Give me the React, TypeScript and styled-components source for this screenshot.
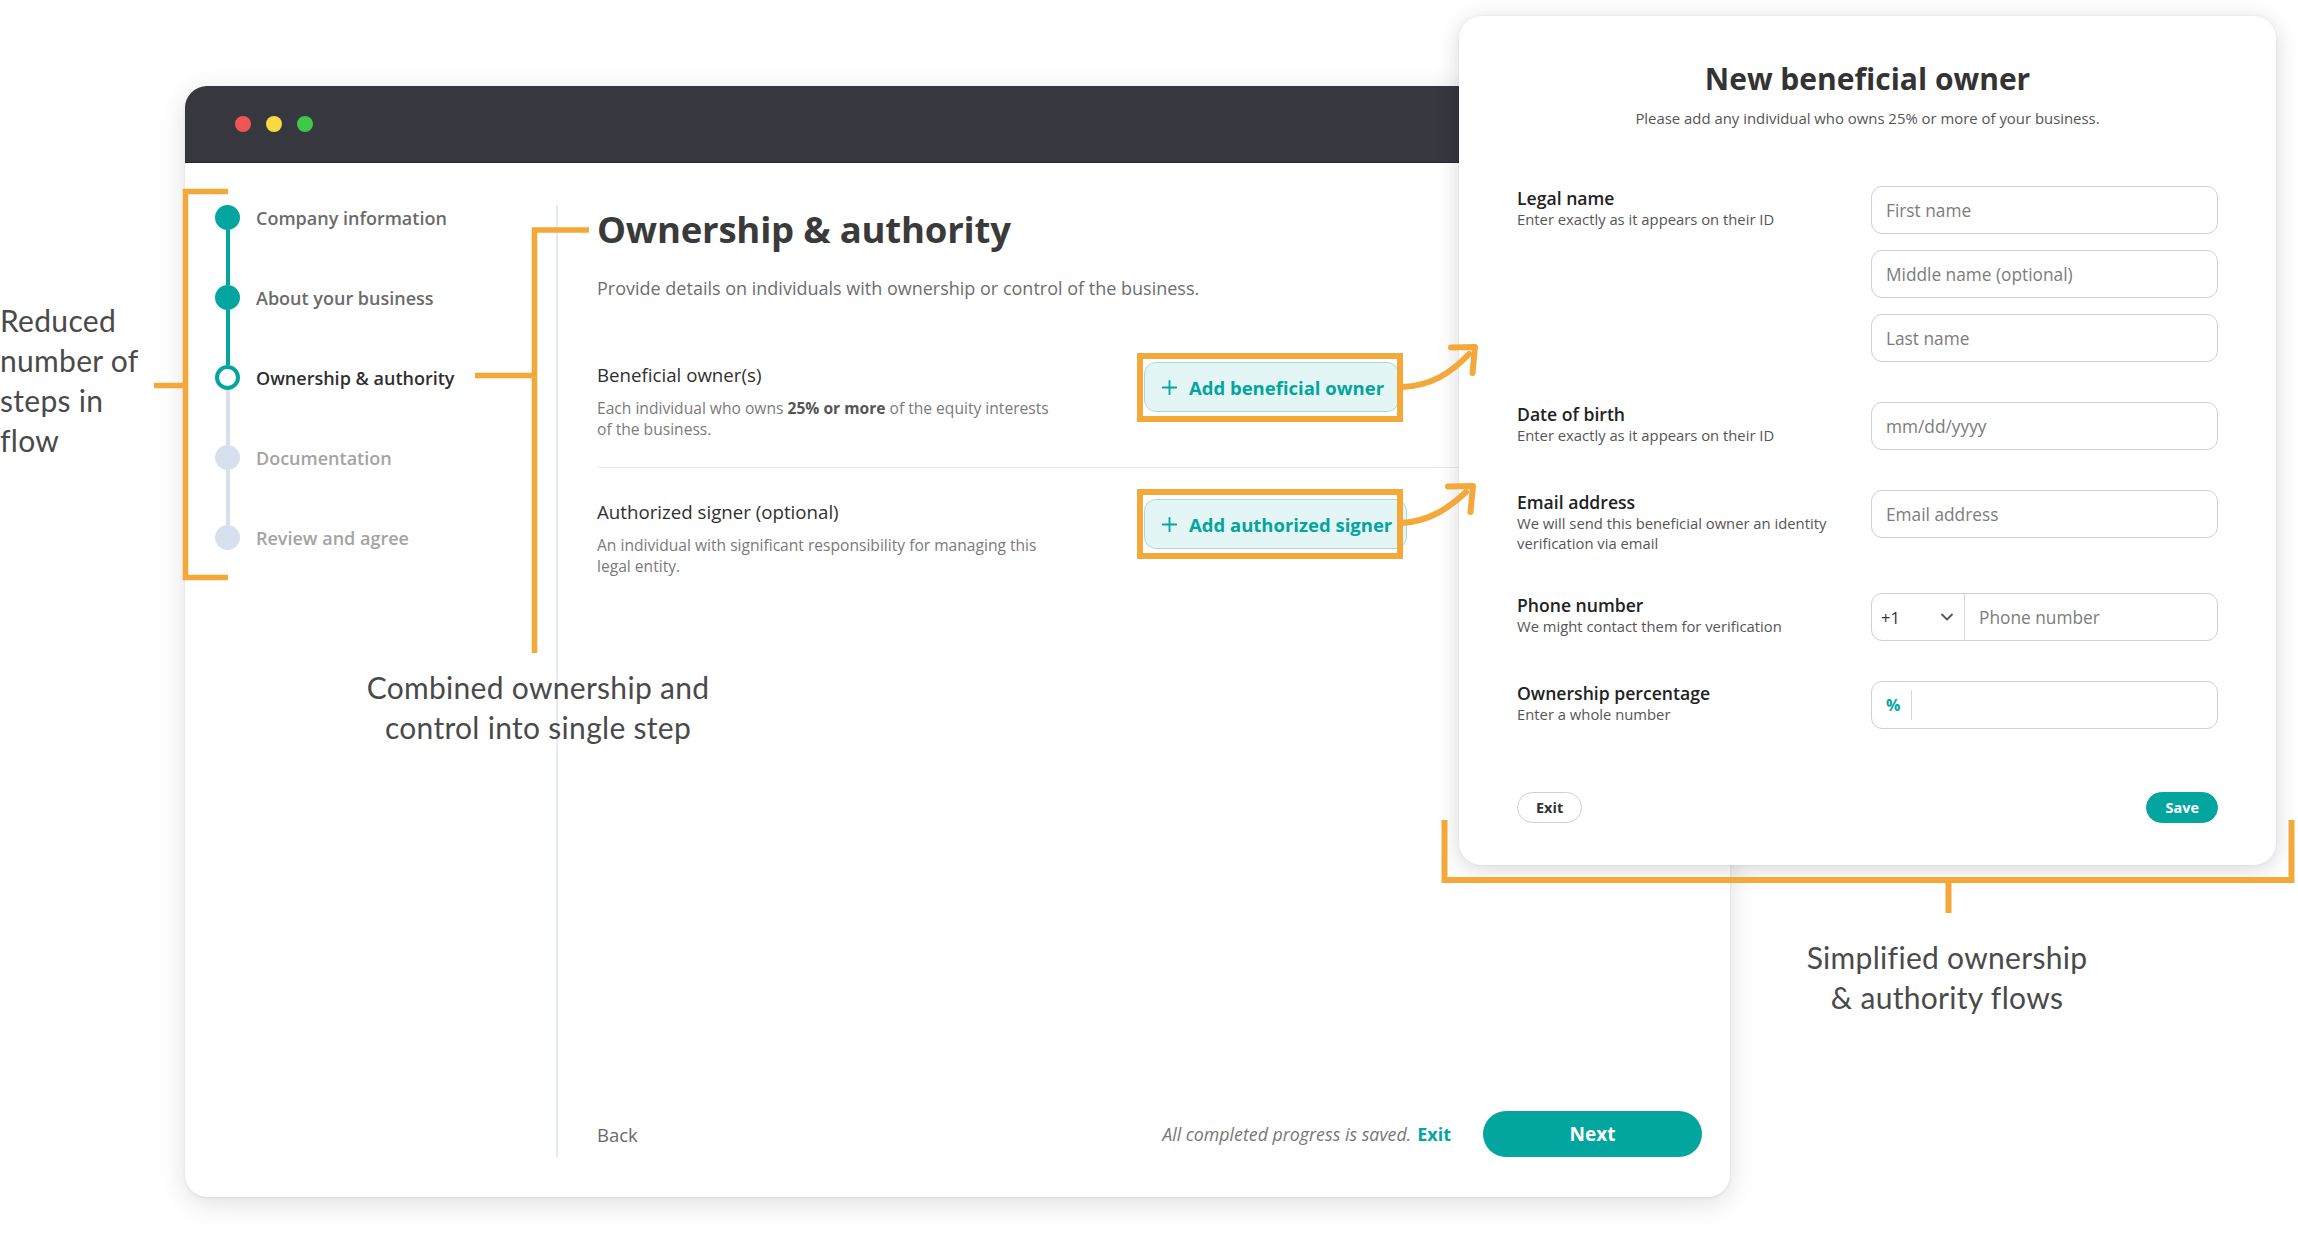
import React from "react";
import styled, { createGlobalStyle } from "styled-components";
import { ChevronDown, Plus } from "lucide-react";

const TEAL = "#03a59f";
const ORANGE = "#f4a83a";

const Global = createGlobalStyle`
  html, body { margin: 0; padding: 0; background: #ffffff; }
  body { font-family: "Open Sans", "Noto Sans", sans-serif; }
  * { box-sizing: border-box; }
`;

const Stage = styled.div`
  position: relative;
  width: 2298px;
  height: 1244px;
  overflow: hidden;
  background: #ffffff;
`;

/* ---------- Browser window mock ---------- */
const Window = styled.div`
  position: absolute;
  left: 185px;
  top: 86px;
  width: 1545px;
  height: 1111px;
  display: flex;
  flex-direction: column;
  background: #ffffff;
  border-radius: 22px;
  box-shadow: 0 6px 28px rgba(0, 0, 0, 0.13), 0 1px 3px rgba(0, 0, 0, 0.08);
`;

const TitleBar = styled.div`
  height: 77px;
  flex: none;
  display: flex;
  align-items: center;
  gap: 15px;
  padding-left: 50px;
  background: #37383f;
  border-radius: 22px 22px 0 0;
  border-bottom: 1px solid #26272c;
`;

const Dot = styled.span<{ $color: string }>`
  width: 16px;
  height: 16px;
  border-radius: 50%;
  background: ${(p) => p.$color};
`;

const WindowBody = styled.div`
  flex: 1;
  display: flex;
  padding: 42px 28px 40px 0;
`;

const Sidebar = styled.nav`
  width: 371px;
  flex: none;
  padding-left: 30px;
  display: flex;
  flex-direction: column;
`;

const StepRow = styled.div`
  display: flex;
  align-items: center;
  gap: 16px;
  height: 25px;
`;

const StepCircle = styled.span<{ $state: "done" | "current" | "todo" }>`
  width: 25px;
  height: 25px;
  border-radius: 50%;
  flex: none;
  background: ${(p) =>
    p.$state === "done" ? TEAL : p.$state === "current" ? "#ffffff" : "#d7e0ee"};
  border: ${(p) => (p.$state === "current" ? `4px solid ${TEAL}` : "none")};
`;

const StepLabel = styled.span<{ $state: "done" | "current" | "todo" }>`
  font-size: 18px;
  font-weight: 600;
  white-space: nowrap;
  color: ${(p) =>
    p.$state === "done" ? "#6b6b6b" : p.$state === "current" ? "#2f2f2f" : "#a3a3a3"};
`;

const Connector = styled.span<{ $active: boolean }>`
  width: 4px;
  height: 55px;
  margin-left: 10.5px;
  background: ${(p) => (p.$active ? TEAL : "#d7e0ee")};
`;

const Main = styled.main`
  flex: 1;
  display: flex;
  flex-direction: column;
  border-left: 2px solid #e5ebf3;
  padding-left: 39px;
`;

const PageTitle = styled.h1`
  margin: 3px 0 0;
  font-size: 36.5px;
  line-height: 42px;
  font-weight: 700;
  color: #3a3a3a;
  letter-spacing: -0.2px;
`;

const PageSub = styled.p`
  margin: 26px 0 0;
  font-size: 18px;
  line-height: 24px;
  color: #6e6e6e;
`;

const Section = styled.section<{ $first?: boolean }>`
  display: grid;
  grid-template-columns: 547px auto;
  align-items: start;
  margin-top: ${(p) => (p.$first ? "62px" : "0")};
  padding: ${(p) => (p.$first ? "0 0 28px" : "31px 0 0")};
  border-bottom: ${(p) => (p.$first ? "1.5px solid #e4e9f1" : "none")};
`;

const SectionText = styled.div`
  padding-top: 1px;
`;

const SectionHeading = styled.h3`
  margin: 0;
  font-size: 18.7px;
  line-height: 24px;
  font-weight: 500;
  color: #2f2f2f;
`;

const SectionDesc = styled.p`
  margin: 11px 0 0;
  max-width: 462px;
  font-size: 15.6px;
  line-height: 20.5px;
  color: #7a7a7a;
  b { font-weight: 700; color: #555; }
`;

const AddButton = styled.button`
  justify-self: start;
  height: 50px;
  display: flex;
  align-items: center;
  gap: 8px;
  padding: 0 14px 0 13px;
  background: #e3f5f4;
  border: 1.5px solid #a5dcd8;
  border-radius: 12px;
  color: ${TEAL};
  font-family: "Open Sans", sans-serif;
  font-size: 18.5px;
  font-weight: 700;
  white-space: nowrap;
`;

const Footer = styled.footer`
  margin-top: auto;
  height: 46px;
  display: flex;
  align-items: center;
`;

const BackLink = styled.span`
  font-size: 18.5px;
  color: #6a6a6a;
`;

const SavedNote = styled.span`
  margin-left: auto;
  font-size: 17.8px;
  font-style: italic;
  color: #777777;
  b { font-style: normal; font-weight: 700; color: ${TEAL}; font-size: 18px; margin-left: 6px; }
`;

const NextButton = styled.button`
  margin-left: 32px;
  width: 219px;
  height: 46px;
  border: none;
  border-radius: 23px;
  background: ${TEAL};
  color: #ffffff;
  font-family: "Open Sans", sans-serif;
  font-size: 19px;
  font-weight: 700;
`;

/* ---------- Modal ---------- */
const Modal = styled.div`
  position: absolute;
  left: 1459px;
  top: 16px;
  width: 817px;
  height: 849px;
  display: flex;
  flex-direction: column;
  padding: 43px 58px 42px;
  background: #ffffff;
  border-radius: 22px;
  box-shadow: 0 4px 22px rgba(0, 0, 0, 0.16), 0 0 2px rgba(0, 0, 0, 0.08);
`;

const ModalTitle = styled.h2`
  margin: 0;
  text-align: center;
  font-size: 30px;
  line-height: 40px;
  font-weight: 700;
  color: #333333;
`;

const ModalSub = styled.p`
  margin: 9px 0 0;
  text-align: center;
  font-size: 14.9px;
  line-height: 20px;
  color: #555555;
`;

const Form = styled.div`
  margin-top: 58px;
  display: flex;
  flex-direction: column;
  gap: 40px;
`;

const FormRow = styled.div`
  display: grid;
  grid-template-columns: 1fr 347px;
  column-gap: 24px;
  align-items: start;
`;

const LabelBlock = styled.div`
  padding-top: 1px;
`;

const FieldLabel = styled.div`
  font-size: 17.6px;
  line-height: 22px;
  font-weight: 600;
  color: #222222;
`;

const FieldHelp = styled.div`
  font-size: 14.8px;
  line-height: 20px;
  color: #555555;
`;

const Inputs = styled.div`
  display: flex;
  flex-direction: column;
  gap: 16px;
`;

const InputBox = styled.div`
  height: 48px;
  display: flex;
  align-items: center;
  border: 1.5px solid #d0d0d0;
  border-radius: 11px;
  background: #ffffff;
  overflow: hidden;
`;

const TextInput = styled.input`
  flex: 1;
  min-width: 0;
  height: 100%;
  border: none;
  outline: none;
  background: transparent;
  padding: 0 14px;
  font-family: "Open Sans", sans-serif;
  font-size: 17.3px;
  color: #333;
  &::placeholder { color: #7c7c7c; }
`;

const CountrySelect = styled.div`
  width: 93px;
  height: 100%;
  flex: none;
  display: flex;
  align-items: center;
  justify-content: space-between;
  padding: 0 7px 0 9px;
  border-right: 1.5px solid #d6d6d6;
  font-size: 16.5px;
  color: #333;
`;

const PercentSign = styled.span`
  flex: none;
  align-self: stretch;
  display: flex;
  align-items: center;
  margin: 8px 0;
  padding: 0 11px 0 14px;
  border-right: 1.5px solid #d6d6d6;
  color: ${TEAL};
  font-size: 16px;
  font-weight: 700;
`;

const Actions = styled.div`
  margin-top: auto;
  display: flex;
  justify-content: space-between;
`;

const PillButton = styled.button<{ $primary?: boolean }>`
  height: 31px;
  padding: 0 ${(p) => (p.$primary ? "18px" : "18px")};
  border-radius: 16px;
  border: 1.5px solid ${(p) => (p.$primary ? TEAL : "#cfcfcf")};
  background: ${(p) => (p.$primary ? TEAL : "#ffffff")};
  color: ${(p) => (p.$primary ? "#ffffff" : "#333333")};
  font-family: "Open Sans", sans-serif;
  font-size: 14.5px;
  font-weight: 700;
`;

/* ---------- Annotations ---------- */
const Callout = styled.div<{ $x: number; $y: number; $w: number; $align: string }>`
  position: absolute;
  left: ${(p) => p.$x}px;
  top: ${(p) => p.$y}px;
  width: ${(p) => p.$w}px;
  text-align: ${(p) => p.$align};
  font-family: "Lato", "Noto Sans", sans-serif;
  font-size: 30px;
  line-height: 40px;
  font-weight: 400;
  letter-spacing: 0.3px;
  color: #4a4a4a;
  white-space: pre-line;
`;

const Overlay = styled.svg`
  position: absolute;
  left: 0;
  top: 0;
  pointer-events: none;
`;

type St = "done" | "current" | "todo";
const steps: { label: string; state: St }[] = [
  { label: "Company information", state: "done" },
  { label: "About your business", state: "done" },
  { label: "Ownership & authority", state: "current" },
  { label: "Documentation", state: "todo" },
  { label: "Review and agree", state: "todo" },
];

export default function App() {
  return (
    <>
      <Global />
      <Stage>
        <Window>
          <TitleBar>
            <Dot $color="#f25454" />
            <Dot $color="#f8d940" />
            <Dot $color="#3fc74a" />
          </TitleBar>
          <WindowBody>
            <Sidebar>
              {steps.map((s, i) => (
                <React.Fragment key={s.label}>
                  {i > 0 && <Connector $active={i <= 2} />}
                  <StepRow>
                    <StepCircle $state={s.state} />
                    <StepLabel $state={s.state}>{s.label}</StepLabel>
                  </StepRow>
                </React.Fragment>
              ))}
            </Sidebar>
            <Main>
              <PageTitle>Ownership &amp; authority</PageTitle>
              <PageSub>Provide details on individuals with ownership or control of the business.</PageSub>
              <Section $first>
                <SectionText>
                  <SectionHeading>Beneficial owner(s)</SectionHeading>
                  <SectionDesc>
                    Each individual who owns <b>25% or more</b> of the equity interests of the business.
                  </SectionDesc>
                </SectionText>
                <AddButton>
                  <Plus size={23} strokeWidth={1.9} />
                  Add beneficial owner
                </AddButton>
              </Section>
              <Section>
                <SectionText>
                  <SectionHeading>Authorized signer (optional)</SectionHeading>
                  <SectionDesc>
                    An individual with significant responsibility for managing this legal entity.
                  </SectionDesc>
                </SectionText>
                <AddButton>
                  <Plus size={23} strokeWidth={1.9} />
                  Add authorized signer
                </AddButton>
              </Section>
              <Footer>
                <BackLink>Back</BackLink>
                <SavedNote>
                  All completed progress is saved.<b>Exit</b>
                </SavedNote>
                <NextButton>Next</NextButton>
              </Footer>
            </Main>
          </WindowBody>
        </Window>

        <Modal>
          <ModalTitle>New beneficial owner</ModalTitle>
          <ModalSub>Please add any individual who owns 25% or more of your business.</ModalSub>
          <Form>
            <FormRow>
              <LabelBlock>
                <FieldLabel>Legal name</FieldLabel>
                <FieldHelp>Enter exactly as it appears on their ID</FieldHelp>
              </LabelBlock>
              <Inputs>
                <InputBox><TextInput placeholder="First name" /></InputBox>
                <InputBox><TextInput placeholder="Middle name (optional)" /></InputBox>
                <InputBox><TextInput placeholder="Last name" /></InputBox>
              </Inputs>
            </FormRow>
            <FormRow>
              <LabelBlock>
                <FieldLabel>Date of birth</FieldLabel>
                <FieldHelp>Enter exactly as it appears on their ID</FieldHelp>
              </LabelBlock>
              <InputBox><TextInput placeholder="mm/dd/yyyy" /></InputBox>
            </FormRow>
            <FormRow>
              <LabelBlock>
                <FieldLabel>Email address</FieldLabel>
                <FieldHelp>We will send this beneficial owner an identity verification via email</FieldHelp>
              </LabelBlock>
              <InputBox><TextInput placeholder="Email address" /></InputBox>
            </FormRow>
            <FormRow>
              <LabelBlock>
                <FieldLabel>Phone number</FieldLabel>
                <FieldHelp>We might contact them for verification</FieldHelp>
              </LabelBlock>
              <InputBox>
                <CountrySelect>
                  +1
                  <ChevronDown size={20} strokeWidth={2.2} color="#555" />
                </CountrySelect>
                <TextInput placeholder="Phone number" />
              </InputBox>
            </FormRow>
            <FormRow>
              <LabelBlock>
                <FieldLabel>Ownership percentage</FieldLabel>
                <FieldHelp>Enter a whole number</FieldHelp>
              </LabelBlock>
              <InputBox>
                <PercentSign>%</PercentSign>
                <TextInput />
              </InputBox>
            </FormRow>
          </Form>
          <Actions>
            <PillButton>Exit</PillButton>
            <PillButton $primary>Save</PillButton>
          </Actions>
        </Modal>

        <Overlay width="2298" height="1244" viewBox="0 0 2298 1244">
          <g fill="none" stroke={ORANGE} strokeWidth="5.5">
            <path d="M228 191.5 H185.5 V577.5 H228" />
            <path d="M154 385.5 H185.5" />
            <path d="M589 230 H534.5 V653" />
            <path d="M475 375.5 H534.5" />
            <rect x="1140" y="356" width="260" height="63" strokeWidth="6" />
            <rect x="1140" y="492" width="260" height="64" strokeWidth="6" />
            <path d="M1444.5 820 V880 H2291.5 V820" strokeWidth="6" />
            <path d="M1948.5 880 V913" strokeWidth="6" />
          </g>
          <g fill="none" stroke={ORANGE} strokeLinecap="round" strokeLinejoin="round">
            <path d="M1402 387 C1430 386 1450 374 1469 354" strokeWidth="6" />
            <path d="M1451 347.5 L1475 347 L1472.5 373" strokeWidth="6" />
            <path d="M1402 523 C1430 521 1449 508 1466 492" strokeWidth="6" />
            <path d="M1448 486.5 L1473 486 L1470.5 512" strokeWidth="6" />
          </g>
        </Overlay>

        <Callout $x={0} $y={300} $w={170} $align="left">
          {"Reduced\nnumber of\nsteps in\nflow"}
        </Callout>
        <Callout $x={338} $y={667} $w={400} $align="center">
          {"Combined ownership and\ncontrol into single step"}
        </Callout>
        <Callout $x={1747} $y={937} $w={400} $align="center">
          {"Simplified ownership\n& authority flows"}
        </Callout>
      </Stage>
    </>
  );
}
